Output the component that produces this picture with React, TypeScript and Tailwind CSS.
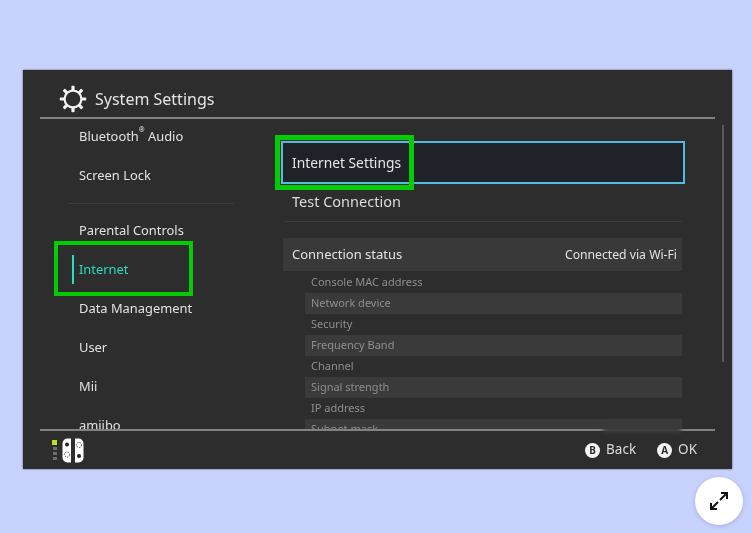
const menu = [
  { label: "Parental Controls" },
  { label: "Internet", active: true },
  { label: "Data Management" },
  { label: "User" },
  { label: "Mii" },
  { label: "amiibo" },
];

const details = [
  "Console MAC address",
  "Network device",
  "Security",
  "Frequency Band",
  "Channel",
  "Signal strength",
  "IP address",
  "Subnet mask",
];

function Gear() {
  const teeth = [0, 45, 90, 135, 180, 225, 270, 315];
  return (
    <svg width="28" height="28" viewBox="0 0 28 28" className="shrink-0">
      {teeth.map((a) => (
        <rect key={a} x="12.4" y="0.800" width="3.200" height="6" rx="0.800" fill="#f2f2f2" transform={`rotate(${a} 14 14)`} />
      ))}
      <circle cx="14" cy="14" r="8.400" fill="#2d2d2d" stroke="#f2f2f2" strokeWidth="2.200" />
    </svg>
  );
}

function Joycons() {
  return (
    <div className="flex items-center gap-[4px]">
      <div className="flex flex-col gap-[2px]">
        <span className="w-[5px] h-[5px] bg-[#b4e61e]" />
        <span className="w-[4px] h-[3px] ml-[0.5px] bg-[#6e6e6e]" />
        <span className="w-[4px] h-[3px] ml-[0.5px] bg-[#6e6e6e]" />
        <span className="w-[4px] h-[3px] ml-[0.5px] bg-[#6e6e6e]" />
      </div>
      <svg width="24" height="25" viewBox="0 0 24 25">
        <path d="M10 .5H6.500A5 5 0 0 0 1.500 5.500v14a5 5 0 0 0 5 5H10Z" fill="#fff" />
        <path d="M14 .5h3.500a5 5 0 0 1 5 5v14a5 5 0 0 1-5 5H14Z" fill="#fff" />
        <circle cx="6" cy="6.500" r="2" fill="#222" />
        <circle cx="18" cy="18" r="2" fill="#222" />
        <circle cx="6" cy="16.500" r="2.600" fill="none" stroke="#555" strokeWidth="1" strokeDasharray="1.500 1" />
        <circle cx="18" cy="7" r="2.600" fill="none" stroke="#555" strokeWidth="1" strokeDasharray="1.500 1" />
      </svg>
    </div>
  );
}

function Hint({ letter, label }: { letter: string; label: string }) {
  return (
    <div className="flex items-center gap-[6px]">
      <span className="w-[15px] h-[15px] rounded-full bg-[#f4f4f4] text-[#2d2d2d] text-[10px] font-bold flex items-center justify-center leading-none">
        {letter}
      </span>
      <span className="text-[13.500px] text-[#dcdcdc] leading-none">{label}</span>
    </div>
  );
}

export default function App() {
  return (
    <div
      className="relative w-[752px] h-[533px] overflow-hidden bg-[#c8d2ff] pt-[70px] pl-[23px]"
      style={{ fontFamily: '"Noto Sans", "Open Sans", sans-serif' }}
    >
      <div className="relative w-[709px] h-[399px] bg-[#2d2d2d] flex flex-col shadow-[0_0_2px_rgba(40,40,60,0.7)] blur-[0.35px]">
        <header className="mx-[17px] h-[49px] shrink-0 border-b-2 border-[#828282] flex items-center gap-[8px] pl-[19px] pt-[10px]">
          <Gear />
          <h1 className="text-[16px] text-[#e4e4e4] leading-none">System Settings</h1>
        </header>

        <div className="flex-1 min-h-0 flex overflow-hidden">
          <nav className="w-[227px] shrink-0 pl-[17px] flex flex-col text-[#e2e2e2] text-[12.900px] leading-none -mt-[2px]">
            <div className="h-[39px] shrink-0 flex items-center pl-[39px]">
              <span>
                Bluetooth<sup className="text-[7px] align-super leading-none">®</sup> Audio
              </span>
            </div>
            <div className="h-[39px] shrink-0 flex items-center pl-[39px]">Screen Lock</div>
            <div className="h-[9px] mb-[7px] shrink-0 ml-[28px] mr-[16px] border-b border-[#3c3c3c]" />
            {menu.map((m) => (
              <div
                key={m.label}
                className={`h-[39px] shrink-0 flex items-center pl-[39px] relative ${m.active ? "text-[#2adcc0]" : ""}`}
              >
                {m.active && <span className="absolute left-[32px] top-[5px] h-[29px] w-[2px] bg-[#2adcc0]" />}
                {m.label}
              </div>
            ))}
          </nav>

          <main className="flex-1 min-w-0 flex overflow-hidden pt-[22px] pl-[33px]">
            <div className="w-[399px] shrink-0">
              <div className="ml-[-2px] mr-[-3px] h-[43px] border-2 border-[#52bcdc] bg-[#1f2329] flex items-center pl-[9px] pt-[1px] text-[13.800px] text-[#e6e6e6]">
                Internet Settings
              </div>
              <div className="h-[38px] flex items-center pl-[9px] pb-[2px] text-[14.500px] text-[#dcdcdc] border-b border-[#3b3b3b]">
                Test Connection
              </div>
              <div className="mt-[16px] h-[33px] bg-[#393939] flex items-center justify-between pl-[9px] pr-[5px] text-[#e2e2e2]">
                <span className="text-[13px]">Connection status</span>
                <span className="text-[12.200px] pt-[2px]">Connected via Wi-Fi</span>
              </div>
              <div className="ml-[22px] pt-[1px]">
                {details.map((d, i) => (
                  <div
                    key={d}
                    className={`h-[21px] flex items-center pl-[6px] text-[11px] text-[#8e8e8e] ${i % 2 === 1 ? "bg-[#3a3a3a]" : ""}`}
                  >
                    {d}
                  </div>
                ))}
              </div>
            </div>
            <div className="ml-[40px] mt-[-16px] w-[2px] h-[237px] bg-[#5a5a5a] shrink-0" />
          </main>
        </div>

        <footer className="relative mx-[17px] h-[40px] shrink-0 border-t-2 border-[#828282] bg-[#2d2d2d] flex items-center justify-between pl-[12px] pr-[18px]">
          <Joycons />
          <div className="flex items-center gap-[21px]">
            <Hint letter="B" label="Back" />
            <Hint letter="A" label="OK" />
          </div>
        </footer>

        <div className="absolute left-[580px] top-[350px] w-[78px] h-[13px] bg-[#3a3a3a] blur-[2px]" />

        <div className="absolute left-[31px] top-[171px] w-[139px] h-[55px] border-[4px] border-[#04cc04]" />
        <div className="absolute left-[252px] top-[65px] w-[139px] h-[55px] border-[5px] border-[#04cc04]" />
      </div>

      <button className="absolute left-[695px] top-[477px] w-[48px] h-[48px] rounded-full bg-white shadow-[0_1px_4px_rgba(60,60,100,0.25)] flex items-center justify-center">
        <svg width="22" height="22" viewBox="0 0 22 22" fill="none" stroke="#111" strokeWidth="2">
          <path d="M13 3h6v6M19 3l-7 7M9 19H3v-6M3 19l7-7" />
        </svg>
      </button>
    </div>
  );
}
